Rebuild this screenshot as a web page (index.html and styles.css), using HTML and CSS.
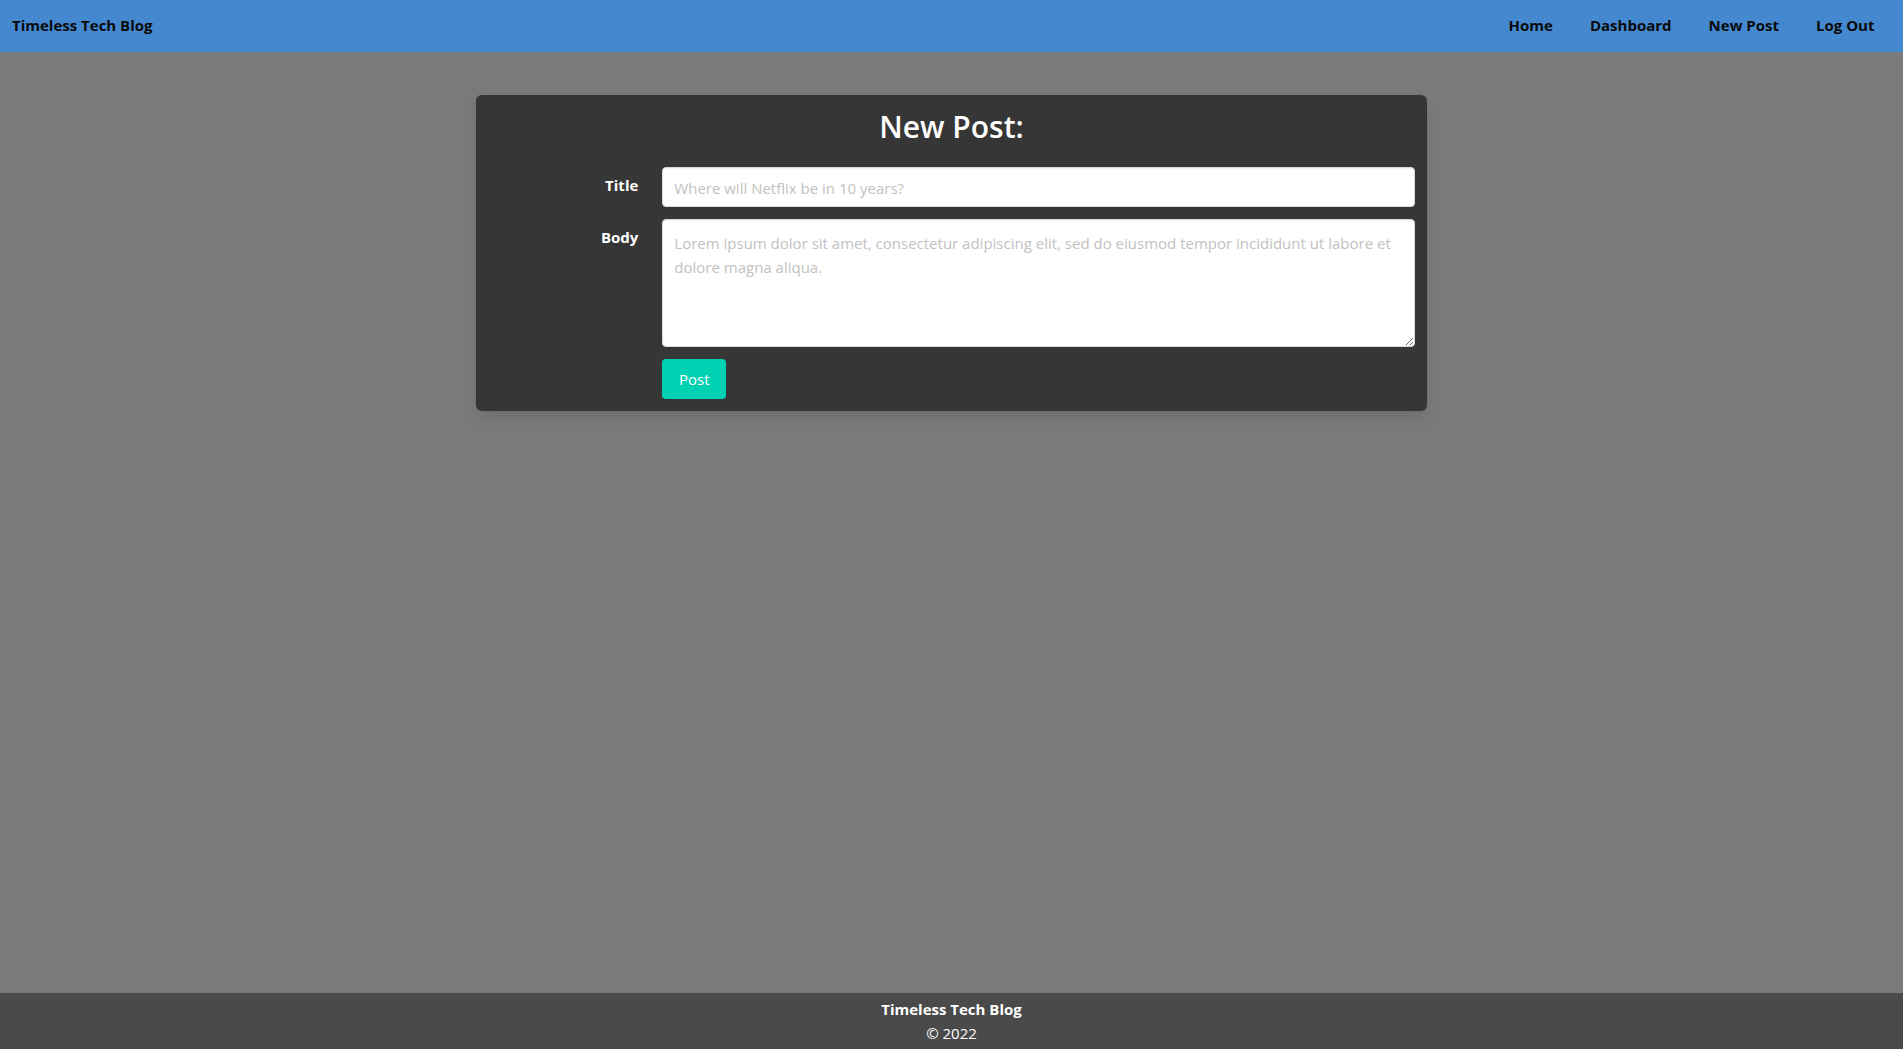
FILE: index.html
```html
<!DOCTYPE html>
<html lang="en">
<head>
<meta charset="utf-8">
<title>Timeless Tech Blog</title>
<link rel="stylesheet" href="styles.css">
</head>
<body>
<nav class="navbar">
  <a class="brand" href="#">Timeless Tech Blog</a>
  <div class="nav-end">
    <a class="nav-item" href="#">Home</a>
    <a class="nav-item" href="#">Dashboard</a>
    <a class="nav-item" href="#">New Post</a>
    <a class="nav-item" href="#">Log Out</a>
  </div>
</nav>
<main class="main">
  <form class="card">
    <h1 class="title">New Post:</h1>
    <div class="field">
      <div class="field-label"><label class="label">Title</label></div>
      <div class="field-body">
        <input class="input" type="text" placeholder="Where will Netflix be in 10 years?">
      </div>
    </div>
    <div class="field">
      <div class="field-label"><label class="label">Body</label></div>
      <div class="field-body">
        <textarea class="textarea" placeholder="Lorem ipsum dolor sit amet, consectetur adipiscing elit, sed do eiusmod tempor incididunt ut labore et dolore magna aliqua."></textarea>
      </div>
    </div>
    <div class="field">
      <div class="field-label"></div>
      <div class="field-body">
        <button class="button" type="button">Post</button>
      </div>
    </div>
  </form>
</main>
<footer class="footer">
  <div class="footer-title">Timeless Tech Blog</div>
  <div>© 2022</div>
</footer>
</body>
</html>
```

FILE: styles.css
```css
* { box-sizing: border-box; }
html, body { margin: 0; padding: 0; }
body {
  font-family: "Open Sans", "Noto Sans", sans-serif;
  font-size: 16px;
  line-height: 1.5;
  color: #4a4a4a;
  background: #7a7a7a;
  min-height: 100vh;
  display: flex;
  flex-direction: column;
}
.navbar {
  height: 52px;
  background: #4489d0;
  display: flex;
  align-items: center;
  justify-content: space-between;
  padding-bottom: 2px;
}
.brand {
  padding: 0 12px;
  font-weight: 700;
  color: #0a0a0a;
  text-decoration: none;
  font-size: 15px;
}
.nav-end {
  display: flex;
  padding-right: 10px;
}
.nav-item {
  padding: 0 18.5px;
  font-weight: 700;
  color: #0a0a0a;
  text-decoration: none;
  font-size: 15px;
}
.main {
  flex: 1;
  padding-top: 43px;
  display: flex;
  justify-content: center;
  align-items: flex-start;
}
.card {
  width: 50%;
  background: #363636;
  border-radius: 6px;
  padding: 12px;
  box-shadow: 0 0.5em 1em -0.125em rgba(10,10,10,0.1), 0 0 0 1px rgba(10,10,10,0.02);
}
.title {
  margin: 0 0 24px;
  padding-top: 2px;
  height: 36px;
  text-align: center;
  color: #fff;
  font-size: 30px;
  font-weight: 600;
  line-height: 36px;
}
.field {
  display: flex;
  margin-bottom: 12px;
}
.field:last-child { margin-bottom: 0; }
.field-label {
  flex: 1 1 0;
  margin-right: 24px;
  text-align: right;
  padding-top: 6px;
}
.field-body {
  flex: 5 1 0;
}
.label {
  color: #fff;
  font-weight: 700;
  font-size: 15px;
}
.input, .textarea {
  display: block;
  width: 100%;
  font-family: inherit;
  font-size: 15px;
  background: #fff;
  border: 1px solid #dbdbdb;
  border-radius: 4px;
  box-shadow: inset 0 0.0625em 0.125em rgba(10,10,10,0.05);
  color: #363636;
}
.input {
  height: 40px;
  padding: 2px 11px 0;
}
.textarea {
  height: 128px;
  padding: 11px 11px 7px;
  line-height: 24px;
  resize: vertical;
}
.input::placeholder, .textarea::placeholder { color: #c2c2c2; }
.button {
  height: 40px;
  width: 64px;
  border: none;
  border-radius: 4px;
  background: #00d1b2;
  color: #fff;
  font-family: inherit;
  font-size: 15px;
  padding: 0;
}
.footer {
  height: 56px;
  background: #4a4a4a;
  color: #fff;
  text-align: center;
  padding-top: 4px;
  font-size: 15px;
  line-height: 24px;
}
.footer-title { font-weight: 700; }
```
